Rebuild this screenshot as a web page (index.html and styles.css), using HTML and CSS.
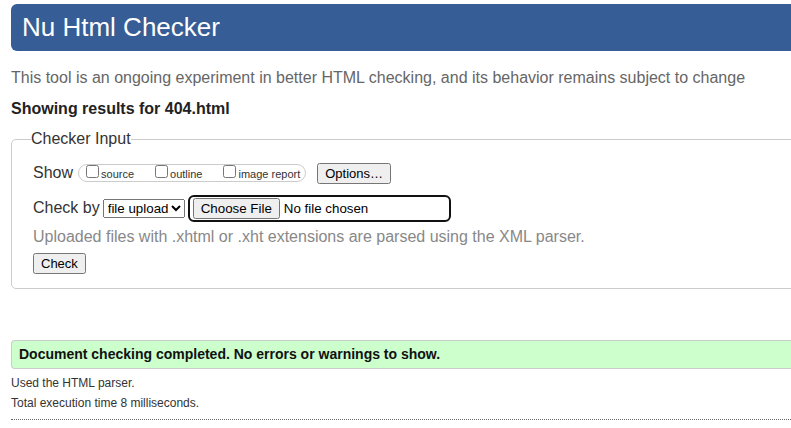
FILE: index.html
```html
<!DOCTYPE html>
<html lang="en">
<head>
<meta charset="utf-8">
<title>Showing results for 404.html - Nu Html Checker</title>
<link rel="stylesheet" href="styles.css">
</head>
<body>
<div class="page">
  <h1 class="banner">Nu Html Checker</h1>
  <p class="desc">This tool is an ongoing experiment in better HTML checking, and its behavior remains subject to change</p>
  <p class="showing">Showing results for 404.html</p>
  <form class="checker">
    <fieldset class="inputs">
      <legend class="legend">Checker Input</legend>
      <div class="row show-row">
        <span class="row-label">Show</span>
        <span class="opts">
          <label class="opt"><input type="checkbox" class="cb">source</label>
          <label class="opt"><input type="checkbox" class="cb">outline</label>
          <label class="opt last"><input type="checkbox" class="cb">image report</label>
        </span>
        <button type="button" class="btn options">Options…</button>
      </div>
      <div class="row by-row">
        <span class="row-label">Check by</span>
        <select class="sel"><option>file upload</option></select>
        <input type="file" class="file">
      </div>
      <p class="hint">Uploaded files with .xhtml or .xht extensions are parsed using the XML parser.</p>
      <div class="submit-row"><button type="button" class="btn">Check</button></div>
    </fieldset>
  </form>
  <p class="success">Document checking completed. No errors or warnings to show.</p>
  <p class="meta first">Used the HTML parser.</p>
  <p class="meta">Total execution time 8 milliseconds.</p>
  <hr class="sep">
</div>
</body>
</html>
```
FILE: styles.css
```css
html, body {
  margin: 0;
  padding: 0;
  overflow: hidden;
  background: #fff;
}
body {
  font-family: "Liberation Sans", Arial, Helvetica, sans-serif;
  color: #222;
}
.page {
  width: 840px;
  padding: 4px 0 0 11px;
}
.banner {
  margin: 0;
  height: 47px;
  line-height: 46px;
  padding-left: 11px;
  font-size: 26px;
  font-weight: normal;
  color: #fff;
  background: #365d95;
  border-radius: 6px 0 0 6px;
}
.desc {
  margin: 18px 0 0;
  font-size: 16px;
  color: #666;
}
.showing {
  margin: 13px 0 0;
  font-size: 16px;
  font-weight: bold;
  color: #222;
}
.checker {
  margin: 12px 0 0;
}
.inputs {
  margin: 0;
  padding: 6px 20px 14px 21px;
  border: 1px solid #ccc;
  border-radius: 5px;
  min-width: 0;
}
.legend {
  padding: 0;
  margin-left: -2px;
  font-size: 16px;
  color: #333;
}
.row {
  display: flex;
  align-items: center;
  font-size: 16px;
  color: #333;
}
.show-row {
  height: 22px;
  margin-top: 8px;
}
.row-label {
  margin-right: 5px;
}
.opts {
  display: flex;
  align-items: flex-start;
  height: 16px;
  border: 1px solid #ccc;
  border-radius: 9px;
  padding: 0 5px 0 3px;
  margin-right: 11px;
}
.opt {
  display: flex;
  align-items: baseline;
  font-size: 11px;
  color: #333;
  margin-right: 17px;
}
.opt.last {
  margin-right: 0;
}
.cb {
  width: 13px;
  height: 13px;
  margin: 0 2px 0 4px;
}
.btn {
  font-family: "Liberation Sans", Arial, sans-serif;
  font-size: 13px;
  color: #000;
}
.by-row {
  margin-top: 11px;
  height: 26px;
}
.by-row .row-label {
  margin-right: 3px;
}
.sel {
  font-family: "Liberation Sans", Arial, sans-serif;
  font-size: 13.33px;
  width: 82px;
  height: 19px;
  margin-right: 3px;
}
.file {
  box-sizing: border-box;
  width: 263px;
  height: 27px;
  padding: 1px 3px;
  border: 2px solid #111;
  border-radius: 6px;
  font-family: "Liberation Sans", Arial, sans-serif;
  font-size: 13.33px;
  color: #000;
}
.hint {
  margin: 7px 0 0;
  font-size: 16px;
  color: #888;
}
.submit-row {
  margin-top: 7px;
}
.success {
  margin: 51px 0 0;
  padding: 0 7px;
  height: 27px;
  line-height: 27px;
  font-size: 14px;
  font-weight: bold;
  color: #111;
  background: #ccffcc;
  border: 1px solid #ccc;
  border-right: 0;
  border-radius: 4px 0 0 4px;
}
.meta {
  margin: 6px 0 0;
  font-size: 12px;
  color: #333;
}
.meta.first {
  margin-top: 7px;
}
.sep {
  margin: 9px 0 0;
  border: 0;
  border-top: 1px dotted #666;
  height: 0;
}
```
